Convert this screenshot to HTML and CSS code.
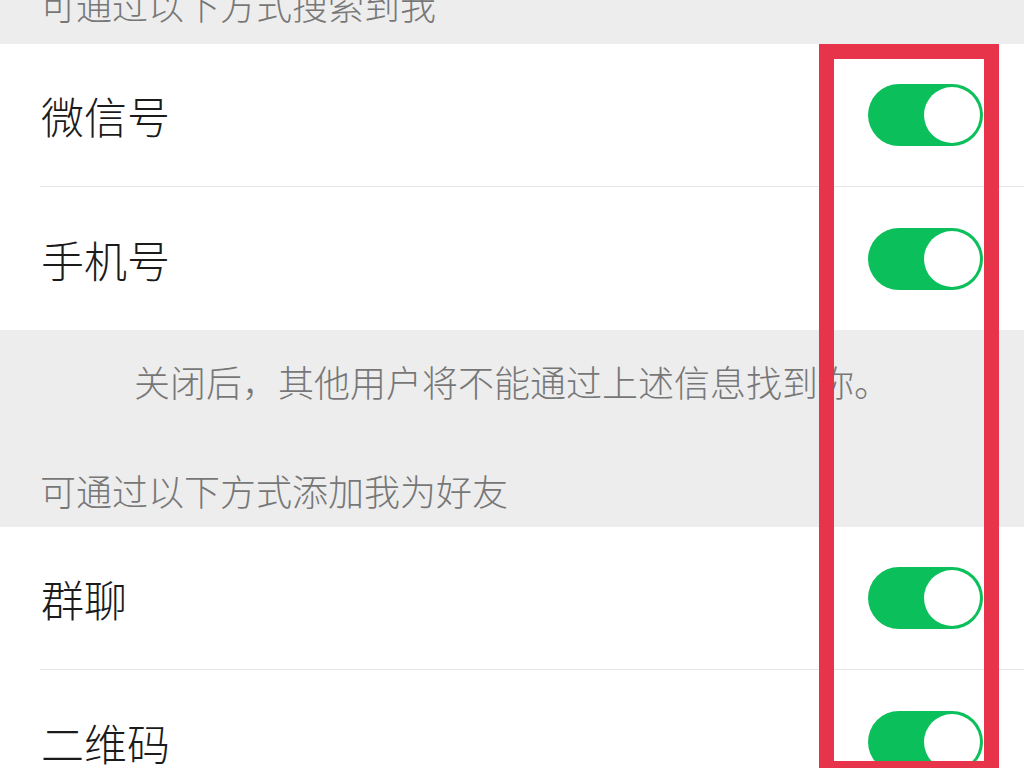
FILE: index.html
```html
<!DOCTYPE html>
<html lang="zh-CN">
<head>
  <meta charset="UTF-8" />
  <title>添加我的方式</title>
  <link rel="stylesheet" href="styles.css">
</head>
<body>

  <div class="title first">可通过以下方式搜索到我</div>

  <div class="group">
    <div class="row">
      <div class="row-inner">
        <span class="label">微信号</span>
        <span class="switch on"><span class="knob"></span></span>
      </div>
    </div>
    <div class="row">
      <div class="row-inner last">
        <span class="label">手机号</span>
        <span class="switch on"><span class="knob"></span></span>
      </div>
    </div>
  </div>

  <div class="note">关闭后，其他用户将不能通过上述信息找到你。</div>

  <div class="title">可通过以下方式添加我为好友</div>

  <div class="group">
    <div class="row">
      <div class="row-inner">
        <span class="label">群聊</span>
        <span class="switch on"><span class="knob"></span></span>
      </div>
    </div>
    <div class="row">
      <div class="row-inner last">
        <span class="label">二维码</span>
        <span class="switch on"><span class="knob"></span></span>
      </div>
    </div>
  </div>

  <!-- highlight box drawn over the switches -->
  <div class="highlight"></div>

</body>
</html>
```

FILE: styles.css
```css
html {
  overflow: hidden;
}

body {
  margin: 0;
  background: #ededed;
  font-family: "Noto Sans CJK SC", "Noto Sans", sans-serif;
  font-weight: 300;
  color: #1b1b1b;
  position: relative;
}

.title {
  height: 121px;
  box-sizing: border-box;
  display: flex;
  align-items: flex-end;
  padding: 0 0 12px 40px;
  font-size: 36px;
  line-height: 50px;
  color: #777;
}

.title.first {
  margin-top: -77px;
  padding-bottom: 15px;
}

.group {
  background: #fff;
}

.row {
  padding-left: 40px;
}

.row-inner {
  height: 143px;
  box-sizing: border-box;
  display: flex;
  align-items: center;
  justify-content: space-between;
  padding-right: 41px;
  border-bottom: 1px solid #e6e6e6;
}

.row-inner.last {
  border-bottom: none;
}

.label {
  font-size: 43px;
  padding-left: 1px;
}

.switch {
  width: 115px;
  height: 62px;
  box-sizing: border-box;
  padding: 3px;
  border-radius: 31px;
  background: #e5e5e5;
  display: flex;
}

.switch.on {
  background: #0bbf5a;
  justify-content: flex-end;
}

.knob {
  width: 56px;
  height: 56px;
  border-radius: 50%;
  background: #fff;
}

.note {
  padding: 26px 0 0 134px;
  font-size: 36px;
  line-height: 50px;
  color: #777;
}

.highlight {
  position: absolute;
  left: 819px;
  top: 44px;
  width: 180px;
  height: 732px;
  box-sizing: border-box;
  border: 15px solid #e8344a;
}
```
